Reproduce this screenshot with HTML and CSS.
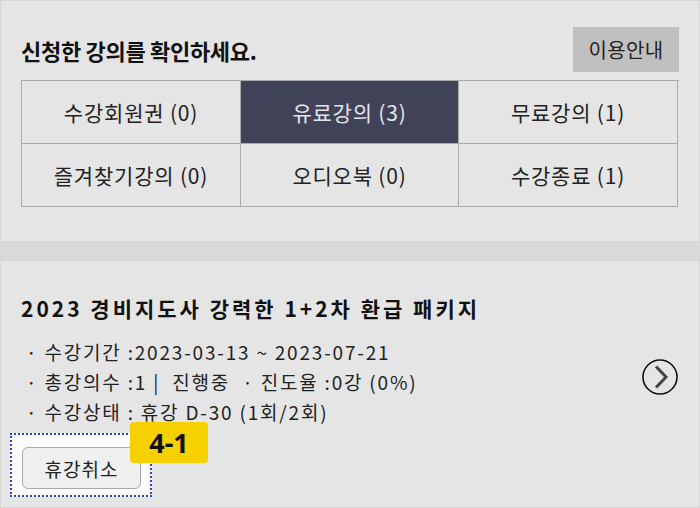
FILE: index.html
```html
<!DOCTYPE html>
<html>
  <head>
    <meta charset="utf-8">
    <title>나의 강의실</title>
    <link rel="stylesheet" href="styles.css">
  </head>
  <body>

    <div class="box top-box">
      <div class="head">
        <h2 class="head-title">신청한 강의를 확인하세요.</h2>
        <button type="button" class="guide-btn">이용안내</button>
      </div>

      <div class="tabs">
        <div class="tab">수강회원권 (0)</div>
        <div class="tab on">유료강의 (3)</div>
        <div class="tab">무료강의 (1)</div>
        <div class="tab">즐겨찾기강의 (0)</div>
        <div class="tab">오디오북 (0)</div>
        <div class="tab">수강종료 (1)</div>
      </div>
    </div>

    <div class="box lecture">
      <h3 class="lecture-title">2023 경비지도사 강력한 1+2차 환급 패키지</h3>

      <div class="lecture-body">
        <ul class="info">
          <li>· 수강기간 :2023-03-13 ~ 2023-07-21</li>
          <li>· 총강의수 :1 |  진행중  · 진도율 :0강 (0%)</li>
          <li>· 수강상태 : 휴강 D-30 (1회/2회)</li>
        </ul>
        <a class="go" href="#">
          <svg width="36" height="36" viewBox="0 0 36 36">
            <circle cx="18" cy="18" r="17" fill="none" stroke="#111" stroke-width="1.6"/>
            <path d="M14 7.5 L24 18 L14 28.5" fill="none" stroke="#444" stroke-width="3"/>
          </svg>
        </a>
      </div>

      <div class="btn-wrap">
        <button type="button" class="pause-btn">휴강취소</button>
      </div>

      <span class="mark">4-1</span>
    </div>

  </body>
</html>
```

FILE: styles.css
```css
body{
  margin: 0;
  background: #d9d9d9;
  font-family: "Noto Sans CJK KR", "Noto Sans", sans-serif;
  color: #222;
}

.box{
  background: #e5e5e5;
  border: 1px solid #d6d6d6;
  box-sizing: border-box;
}

.top-box{
  height: 242px;
  padding: 0 20px;
  margin-bottom: 18px;
}

.head{
  display: flex;
  justify-content: space-between;
  align-items: center;
  padding-top: 26px;
  margin-bottom: 8px;
}

.head-title{
  margin: 0;
  font-size: 22px;
  font-weight: bold;
  color: #111;
  letter-spacing: -0.3px;
}

.guide-btn{
  width: 106px;
  height: 45px;
  border: none;
  background: #c0c0c0;
  font-family: inherit;
  font-size: 20px;
  letter-spacing: 0.3px;
  color: #222;
  padding: 0;
}

.tabs{
  display: grid;
  grid-template-columns: 219px 218px 219px;
  border: 1px solid #aaa;
  border-right: none;
  border-bottom: none;
}

.tab{
  height: 62px;
  display: flex;
  align-items: center;
  justify-content: center;
  font-size: 21px;
  letter-spacing: 0.8px;
  border-right: 1px solid #aaa;
  border-bottom: 1px solid #aaa;
  color: #222;
}

.tab.on{
  background: #404358;
  color: #e4e4e8;
}

.lecture{
  position: relative;
  height: 248px;
  padding: 32px 20px 0;
}

.lecture-title{
  margin: 0;
  font-size: 21px;
  line-height: 30px;
  font-weight: bold;
  letter-spacing: 3px;
  color: #111;
}

.lecture-body{
  display: flex;
  justify-content: space-between;
  align-items: center;
  margin-top: 14px;
}

.info{
  list-style: none;
  margin: 0;
  padding: 0 0 0 5px;
}

.info li{
  font-size: 19px;
  line-height: 30px;
  letter-spacing: 1.8px;
  white-space: pre;
}

.go{
  display: block;
  width: 36px;
  height: 36px;
  margin: 0 1px 10px 0;
}

.btn-wrap{
  position: relative;
  margin-top: 20px;
  padding-left: 1px;
}

.btn-wrap::before{
  content: "";
  position: absolute;
  left: -11px;
  top: -14px;
  width: 138px;
  height: 60px;
  border: 2px dotted #2f45c2;
  background: #fbfbfb;
}

.pause-btn{
  position: relative;
  width: 119px;
  height: 42px;
  border: 1px solid #aaa;
  border-radius: 6px;
  background: #efefef;
  font-family: inherit;
  font-size: 19px;
  letter-spacing: 1px;
  color: #222;
  padding: 0;
}

.mark{
  position: absolute;
  left: 129px;
  top: 161px;
  width: 78px;
  height: 41px;
  line-height: 41px;
  text-align: center;
  background: #f7d000;
  border-radius: 4px;
  font-family: "Noto Sans", sans-serif;
  font-size: 27px;
  font-weight: bold;
  color: #111;
}
```
